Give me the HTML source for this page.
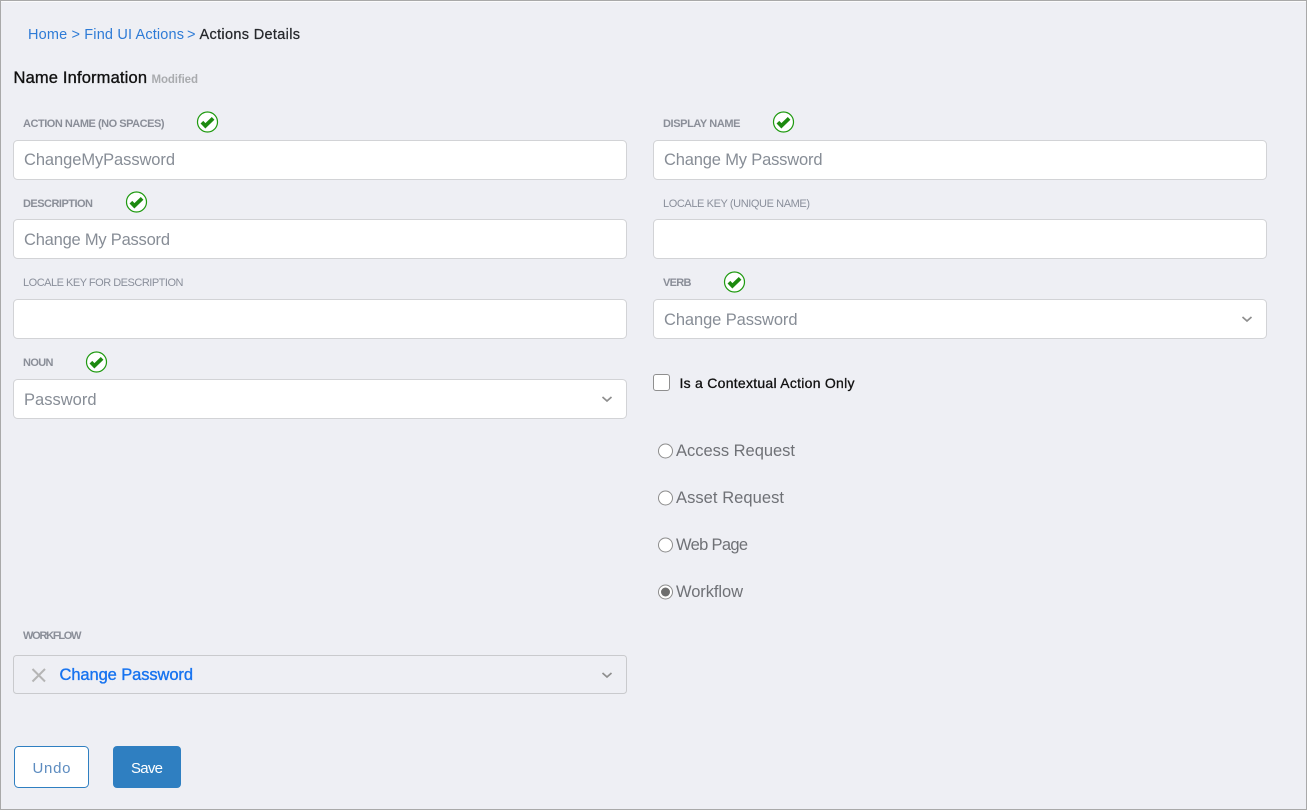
<!DOCTYPE html>
<html lang="en">
<head>
<meta charset="utf-8">
<title>Actions Details</title>
<style>
html,body{margin:0;padding:0;width:1307px;height:810px;overflow:hidden;background:#eeeff4}
svg{display:block}
text{font-family:"Liberation Sans",sans-serif}
.in{fill:#fff;stroke:#d2d3d6;stroke-width:1}
.ph{font-size:16.500px;fill:#878d96}
.lb{font-size:11px;font-weight:bold;fill:#8a8e98}
.ln{font-size:11px;fill:#8a8f9b}
.rd{font-size:16.500px;fill:#6f7176}
.rc{fill:#fff;stroke:#8c8c8c;stroke-width:1}
.chev{fill:none;stroke:#8e8e8e;stroke-width:1.7}
</style>
</head>
<body>
<svg width="1307" height="810" viewBox="0 0 1307 810" xmlns="http://www.w3.org/2000/svg">
<defs>
<g id="ok">
<circle cx="0" cy="0" r="10" fill="#fff" stroke="#1f9a10" stroke-width="1.200"/>
<path d="M-5.600 0.200L-2.100 3.800L5.600-3.600" fill="none" stroke="#1d8a10" stroke-width="3.800"/>
</g>
</defs>
<rect width="1307" height="810" fill="#eeeff4"/>
<rect x="0" y="0" width="1307" height="1" fill="#a9a9a9"/>
<rect x="1" y="1" width="1305" height="1" fill="#fbfbfc"/>
<rect x="0" y="0" width="1" height="810" fill="#a9a9a9"/>
<rect x="1306" y="0" width="1" height="810" fill="#a9a9a9"/>
<rect x="0" y="809" width="1307" height="1" fill="#a9a9a9"/>

<text x="28" y="39" font-size="14.500" fill="#2e7bd6" textLength="156" lengthAdjust="spacing">Home &gt; Find UI Actions</text>
<text x="187" y="39" font-size="14.500" fill="#2e7bd6">&gt;</text>
<text x="199.500" y="39" font-size="14.500" fill="#26282c" textLength="100.500" lengthAdjust="spacing" stroke="#26282c" stroke-width=".25">Actions Details</text>

<text x="13.500" y="83" font-size="16.500" fill="#111" textLength="133.500" lengthAdjust="spacing" stroke="#111" stroke-width=".35">Name Information</text>
<text x="151.500" y="83" font-size="11.500" font-weight="bold" fill="#a9abae" textLength="46.500" lengthAdjust="spacing">Modified</text>

<text class="lb" x="23" y="127" textLength="141.500" lengthAdjust="spacing">ACTION NAME (NO SPACES)</text>
<use href="#ok" x="207.500" y="122"/>
<text class="lb" x="663" y="127" textLength="77.500" lengthAdjust="spacing">DISPLAY NAME</text>
<use href="#ok" x="783.500" y="122"/>
<rect class="in" x="13.500" y="140.500" width="613" height="39" rx="4"/>
<text class="ph" x="24" y="165" textLength="151" lengthAdjust="spacing">ChangeMyPassword</text>
<rect class="in" x="653.500" y="140.500" width="613" height="39" rx="4"/>
<text class="ph" x="664" y="165" textLength="158.500" lengthAdjust="spacing">Change My Password</text>

<text class="lb" x="23" y="207" textLength="70" lengthAdjust="spacing">DESCRIPTION</text>
<use href="#ok" x="136.500" y="202"/>
<text class="ln" x="663" y="207" textLength="147" lengthAdjust="spacing">LOCALE KEY (UNIQUE NAME)</text>
<rect class="in" x="13.500" y="219.500" width="613" height="39" rx="4"/>
<text class="ph" x="24" y="245" textLength="146" lengthAdjust="spacing">Change My Passord</text>
<rect class="in" x="653.500" y="219.500" width="613" height="39" rx="4"/>

<text class="ln" x="23" y="286" textLength="160.500" lengthAdjust="spacing">LOCALE KEY FOR DESCRIPTION</text>
<text class="lb" x="663" y="286" textLength="28.500" lengthAdjust="spacing">VERB</text>
<use href="#ok" x="734.500" y="282"/>
<rect class="in" x="13.500" y="299.500" width="613" height="39" rx="4"/>
<rect class="in" x="653.500" y="299.500" width="613" height="39" rx="4"/>
<text class="ph" x="664" y="325" textLength="133.500" lengthAdjust="spacing">Change Password</text>
<path class="chev" d="M1242.500 317L1247 321L1251.500 317"/>

<text class="lb" x="23" y="366" textLength="30.500" lengthAdjust="spacing">NOUN</text>
<use href="#ok" x="96.500" y="362"/>
<rect class="in" x="13.500" y="379.500" width="613" height="39" rx="4"/>
<text class="ph" x="24" y="405" textLength="72.500" lengthAdjust="spacing">Password</text>
<path class="chev" d="M602.500 397L607 401L611.500 397"/>

<rect x="653.500" y="374.500" width="16" height="16" rx="2.500" fill="#fff" stroke="#8f8f8f"/>
<text x="679.500" y="388" font-size="14" fill="#111" textLength="175" lengthAdjust="spacing" stroke="#111" stroke-width=".3">Is a Contextual Action Only</text>

<circle class="rc" cx="665.500" cy="451" r="7"/>
<text class="rd" x="676" y="456" textLength="119" lengthAdjust="spacing">Access Request</text>
<circle class="rc" cx="665.500" cy="498" r="7"/>
<text class="rd" x="676" y="503" textLength="108" lengthAdjust="spacing">Asset Request</text>
<circle class="rc" cx="665.500" cy="545" r="7"/>
<text class="rd" x="676" y="550" textLength="72" lengthAdjust="spacing">Web Page</text>
<circle class="rc" cx="665.500" cy="592" r="7"/>
<circle cx="665.500" cy="592" r="4.500" fill="#6e6e6e"/>
<text class="rd" x="676" y="597" textLength="67" lengthAdjust="spacing">Workflow</text>

<text class="lb" x="23" y="639" textLength="58.500" lengthAdjust="spacing">WORKFLOW</text>
<rect x="13.500" y="655.500" width="613" height="38" rx="3" fill="#eeeff4" stroke="#c9cacd"/>
<path d="M32.500 669L45 681.500M45 669L32.500 681.500" fill="none" stroke="#b5b5b5" stroke-width="2"/>
<text x="59.500" y="680" font-size="16.500" fill="#1673f0" textLength="133.500" lengthAdjust="spacing" stroke="#1673f0" stroke-width=".35">Change Password</text>
<path class="chev" d="M602.500 673L607 677L611.500 673"/>

<rect x="14.500" y="746.500" width="74" height="41" rx="4" fill="#fff" stroke="#2f7fc1"/>
<text x="32.500" y="773" font-size="15" fill="#5d8cc0" textLength="38" lengthAdjust="spacing">Undo</text>
<rect x="113" y="746" width="68" height="42" rx="4" fill="#2f7fc1"/>
<text x="131" y="773" font-size="15" fill="#fff" textLength="32" lengthAdjust="spacing">Save</text>
</svg>
</body>
</html>
